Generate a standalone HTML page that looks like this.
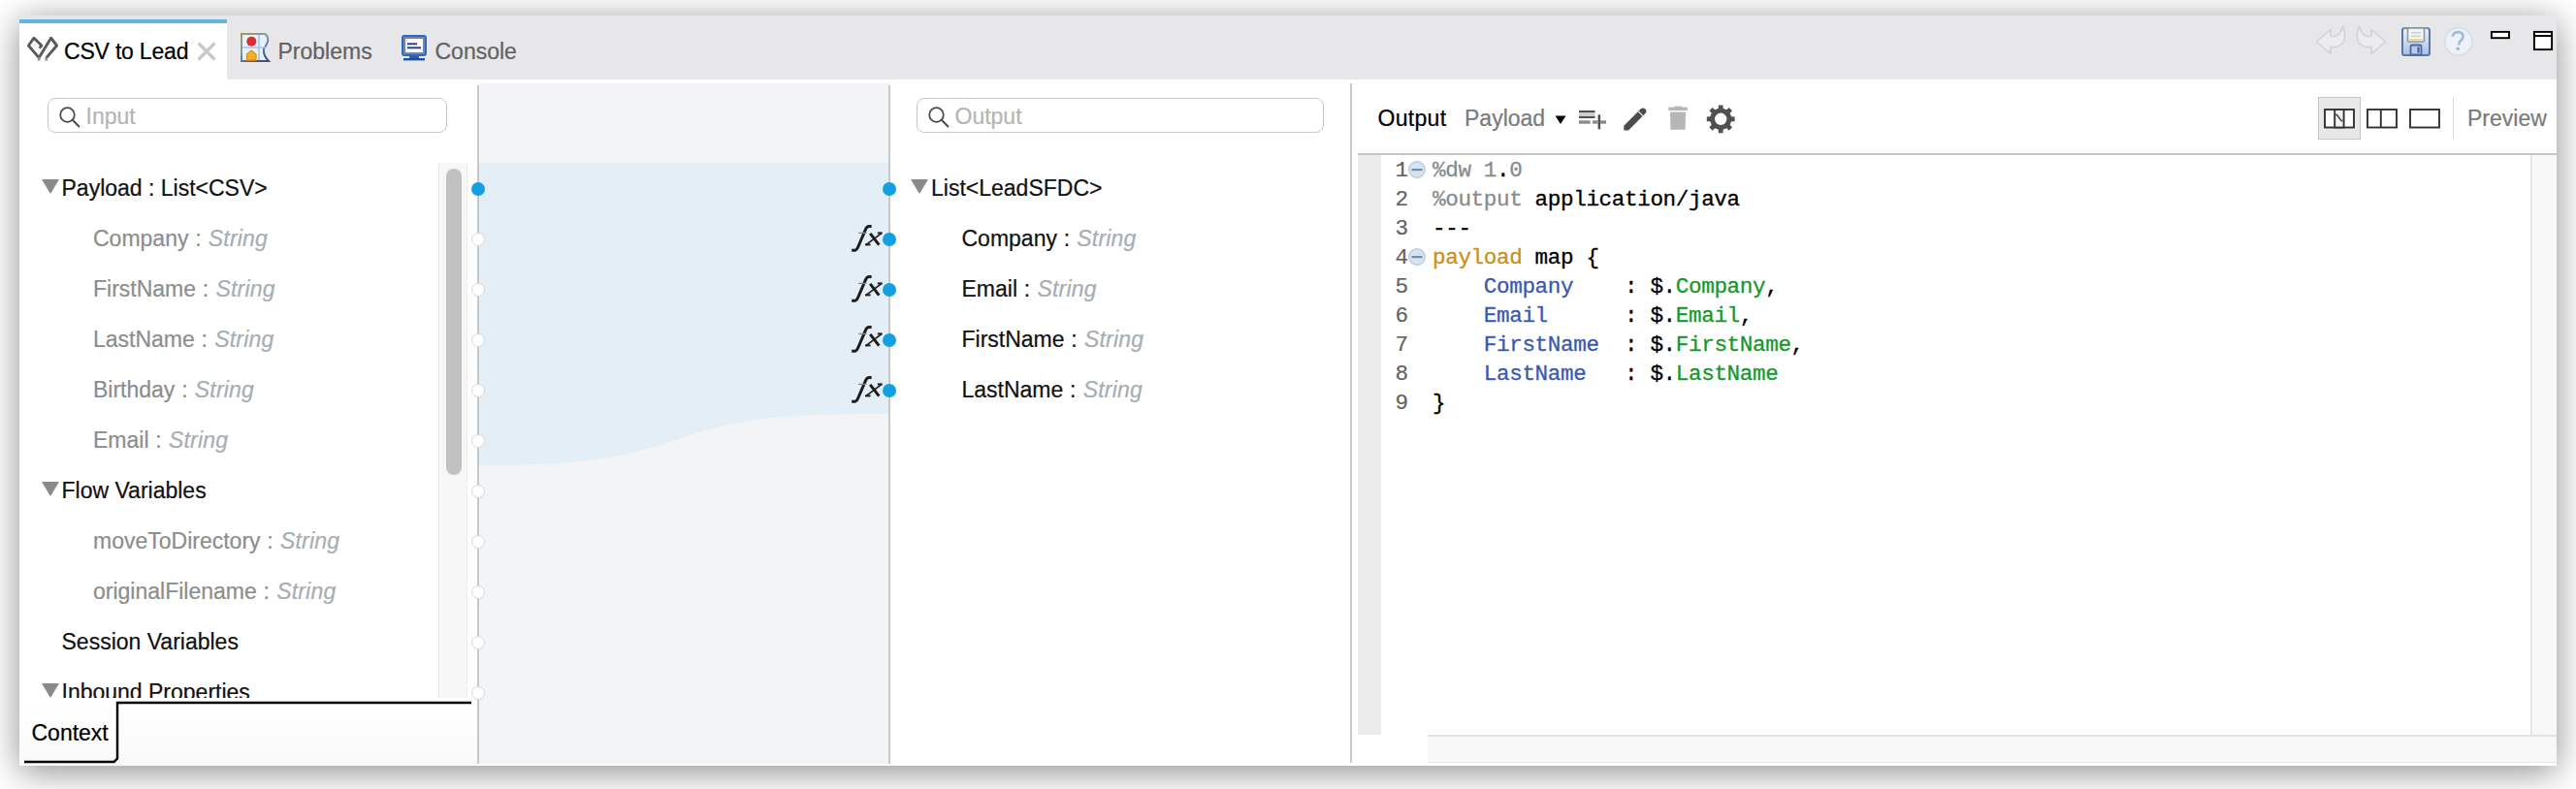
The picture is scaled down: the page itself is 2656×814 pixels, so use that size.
<!DOCTYPE html>
<html><head><meta charset="utf-8">
<style>
*{margin:0;padding:0;box-sizing:border-box}
html,body{width:2656px;height:814px;overflow:hidden;background:#fff;font-family:"Liberation Sans",sans-serif;}
.a{position:absolute}
#win{position:absolute;left:20px;top:16px;width:2616px;height:774px;background:#fff;box-shadow:0 6px 34px rgba(0,0,0,0.45);}
.t{position:absolute;font-size:23px;line-height:26px;white-space:nowrap;-webkit-text-stroke:0.22px currentColor}
.search{position:absolute;border:1.5px solid #c9c9c9;border-radius:8px;background:#fff}
.row{position:absolute;height:52px;line-height:52px;font-size:23px;white-space:nowrap;-webkit-text-stroke:0.22px currentColor}
.hd{color:#111}
.ch{color:#8d8d8d}
.ty{color:#a6aeb4;font-style:italic;letter-spacing:0.2px}
.sep{letter-spacing:0.4px}
.tri{position:absolute;width:0;height:0;border-left:9px solid transparent;border-right:9px solid transparent;border-top:15px solid #8a8a8a}
.dot{position:absolute;width:14px;height:14px;border-radius:7px;background:#13a0e1}
.hdot{position:absolute;width:14px;height:14px;border-radius:7px;background:#fff;border:1.4px solid #d8d8d8}
.fx{position:absolute;font-family:"Liberation Serif",serif;font-style:italic;font-size:31px;color:#2a2a2a;line-height:30px;letter-spacing:-1px;white-space:nowrap}
.code{position:absolute;font-family:"Liberation Mono",monospace;font-size:22.6px;letter-spacing:-0.36px;-webkit-text-stroke:0.3px currentColor;line-height:30px;white-space:pre;color:#000}
.ln{position:absolute;font-family:"Liberation Mono",monospace;font-size:22.6px;-webkit-text-stroke:0.2px currentColor;line-height:30px;color:#626262;white-space:pre}
.g{color:#8a8a8a}.k{color:#c98f1a}.b{color:#3a58b0}.gr{color:#15982a}
</style></head><body>
<div id="win"></div>
<div class="a" style="left:20px;top:16px;width:2616px;height:66px;background:#e7e7ea"></div>
<div class="a" style="left:20px;top:20px;width:214px;height:62px;background:#fff"></div>
<div class="a" style="left:20px;top:20px;width:214px;height:4px;background:#63b5e1"></div>
<svg class="a" style="left:26px;top:36px" width="36" height="30" viewBox="26 36 36 30">
<g fill="none" stroke="#5a5a5a" stroke-width="2.9" stroke-linejoin="round" stroke-linecap="butt">
<path d="M40.6 49.6 L42.9 47 L35 39.2 L29.4 47 L40.2 59.6 L52.6 39.2 L58.6 47 L47.8 59.6"/>
<path d="M40.2 59 L40.2 62.6 M47.8 59 L47.8 62.6" stroke="#8a8a8a" stroke-width="2.6"/>
</g></svg>
<div class="t" style="left:66px;top:40.2px;color:#000;letter-spacing:-0.2px">CSV to Lead</div>
<svg class="a" style="left:202px;top:42px" width="22" height="22" viewBox="202 42 22 22">
<path d="M204.5 44.5 L221.5 61.5 M221.5 44.5 L204.5 61.5" stroke="#c9c9c9" stroke-width="3.2"/></svg>
<svg class="a" style="left:246px;top:32px" width="34" height="34" viewBox="246 32 34 34">
<defs><linearGradient id="pg" x1="0" y1="0" x2="0.6" y2="1"><stop offset="0" stop-color="#a89a50"/><stop offset="0.45" stop-color="#8898aa"/><stop offset="1" stop-color="#43527a"/></linearGradient></defs>
<path d="M249 35 L273 35 Q277 37 276 43 Q274 48 272 50 Q271 57 277 63 L249 63 Z" fill="#e4f3fb" stroke="url(#pg)" stroke-width="2"/>
<path d="M250 49 L275 49 M267 36 L267 62" stroke="#a9c3e6" stroke-width="1.6"/>
<circle cx="259.3" cy="42.8" r="5" fill="#dc2d32"/>
<path d="M254.5 62 L254.5 56 L259.3 52 L264 56 L264 62 Z" fill="#f0b02a" stroke="#e2901a" stroke-width="1.3"/>
</svg>
<div class="t" style="left:286.5px;top:40.2px;color:#626262">Problems</div>
<svg class="a" style="left:412px;top:34px" width="30" height="30" viewBox="412 34 30 30">
<rect x="415" y="37" width="24" height="20" rx="2" fill="#7a84a0" stroke="#2f6ac2" stroke-width="2"/>
<rect x="418" y="40" width="18" height="14" fill="#fff"/>
<rect x="418" y="40" width="2" height="14" fill="#d4f4ff"/>
<rect x="420" y="44.3" width="10" height="2" fill="#2e3e8a"/>
<rect x="420" y="48.3" width="14" height="2" fill="#2e3e8a"/>
<rect x="422" y="57.5" width="10" height="2.5" fill="#2f5ea8"/>
<rect x="416" y="60" width="22" height="2.4" fill="#2050a0"/>
</svg>
<div class="t" style="left:448.5px;top:40.2px;color:#626262">Console</div>
<svg class="a" style="left:2384px;top:24px" width="250" height="38" viewBox="2384 24 250 38">
<path d="M2388.5 43 L2403 30.5 L2403 37.5 L2407 37.5 Q2413 37 2415.5 27 Q2419 35 2417 42 Q2414 48.5 2406 48.5 L2403 48.5 L2403 55.5 Z" fill="#ececee" stroke="#d2d2d2" stroke-width="1.6" stroke-linejoin="round"/>
<path d="M2459.5 43 L2445 30.5 L2445 37.5 L2441 37.5 Q2435 37 2432.5 27 Q2429 35 2431 42 Q2434 48.5 2442 48.5 L2445 48.5 L2445 55.5 Z" fill="#ececee" stroke="#d2d2d2" stroke-width="1.6" stroke-linejoin="round"/>
<defs><linearGradient id="sg" x1="0" y1="0" x2="0" y2="1"><stop offset="0" stop-color="#eef3fa"/><stop offset="1" stop-color="#a9c0e2"/></linearGradient></defs>
<rect x="2477" y="29" width="28" height="28" rx="2.5" fill="url(#sg)" stroke="#5876a8" stroke-width="2"/><path d="M2478 29 L2504 29" stroke="#7f969e" stroke-width="2"/>
<rect x="2482.5" y="29" width="17" height="14" rx="1.5" fill="#f4f6f6" stroke="#8c9a9e" stroke-width="1.6"/>
<rect x="2486" y="33" width="10" height="1.6" fill="#c9d3d6"/><rect x="2486" y="36.5" width="10" height="1.6" fill="#c9d3d6"/>
<rect x="2484" y="40" width="14" height="1.5" fill="#f0cf8a"/>
<rect x="2485.5" y="46.5" width="11" height="10" rx="1.5" fill="#b8cdea" stroke="#4a68a8" stroke-width="1.8"/>
<rect x="2492.5" y="48.5" width="2" height="6" fill="#3a5898"/>
<circle cx="2534.8" cy="42.9" r="14.2" fill="#eef1f5" stroke="#d3dfeb" stroke-width="1.8"/>
<path d="M2528.6 37.6 Q2530 33 2534.5 33 Q2539.5 33.3 2539.5 37.5 Q2539.5 40.5 2536 43 L2535 46.5" fill="none" stroke="#94b0d4" stroke-width="2.5" opacity="0.85"/>
<rect x="2532.6" y="48.8" width="3.2" height="3" fill="#9ab5da"/>
<rect x="2568.9" y="32.9" width="18.1" height="6.3" fill="#fff" stroke="#000" stroke-width="1.9"/>
<rect x="2612.9" y="32.9" width="18.2" height="18.2" fill="#fff" stroke="#000" stroke-width="1.9"/>
<rect x="2612.9" y="36" width="18.2" height="2" fill="#000"/>
</svg>
<div class="search" style="left:49px;top:101px;width:412px;height:36px"></div>
<svg class="a" style="left:58px;top:108px" width="28" height="26" viewBox="58 108 28 26">
<circle cx="69.5" cy="118.5" r="7.3" fill="none" stroke="#4a4a4a" stroke-width="1.8"/>
<path d="M74.8 123.8 L82 131" stroke="#4a4a4a" stroke-width="2"/></svg>
<div class="t" style="left:88.5px;top:107.4px;color:#b5b5b5">Input</div>
<div class="a" style="left:20px;top:160px;width:432px;height:560px;overflow:hidden">
<div class="tri" style="left:22.7px;top:25px"></div>
<div class="row hd" style="left:43.5px;top:8px">Payload : List&lt;CSV&gt;</div>
<div class="row ch" style="left:76px;top:60px">Company<span class="sep"> : </span><span class="ty">String</span></div>
<div class="row ch" style="left:76px;top:112px">FirstName<span class="sep"> : </span><span class="ty">String</span></div>
<div class="row ch" style="left:76px;top:164px">LastName<span class="sep"> : </span><span class="ty">String</span></div>
<div class="row ch" style="left:76px;top:216px">Birthday<span class="sep"> : </span><span class="ty">String</span></div>
<div class="row ch" style="left:76px;top:268px">Email<span class="sep"> : </span><span class="ty">String</span></div>
<div class="tri" style="left:22.7px;top:337px"></div>
<div class="row hd" style="left:43.5px;top:320px">Flow Variables</div>
<div class="row ch" style="left:76px;top:372px">moveToDirectory<span class="sep"> : </span><span class="ty">String</span></div>
<div class="row ch" style="left:76px;top:424px">originalFilename<span class="sep"> : </span><span class="ty">String</span></div>
<div class="row hd" style="left:43.5px;top:476px">Session Variables</div>
<div class="tri" style="left:22.7px;top:545px"></div>
<div class="row hd" style="left:43.5px;top:528px">Inbound Properties</div>
</div>
<div class="a" style="left:452px;top:168px;width:30px;height:552px;background:#f7f7f7;border-left:1.5px solid #e6e6e6;border-right:1.5px solid #ececec"></div>
<div class="a" style="left:460px;top:174px;width:16px;height:316px;border-radius:8px;background:#c1c1c1"></div>
<div class="a" style="left:20px;top:726px;width:472px;height:64px;background:linear-gradient(#fff,#f9f9f9)"></div>
<svg class="a" style="left:20px;top:718px" width="470" height="72" viewBox="20 718 470 72">
<path d="M25 786 L117.5 786 L121 782.5 L121 725 L486 725" fill="none" stroke="#000" stroke-width="2.4"/></svg>
<div class="t" style="left:32.5px;top:742.9px;color:#000">Context</div>
<div class="a" style="left:492px;top:86px;width:426px;height:702px;background:#f3f4f6"></div>
<svg class="a" style="left:494px;top:168px" width="422" height="320" viewBox="494 168 422 320">
<path d="M494 168 L916 168 L916 427 C 800 427 760 432 700 453 C 640 474 590 480 494 480 Z" fill="#e3eef6"/></svg>
<div class="a" style="left:492px;top:88px;width:2px;height:700px;background:#c8c8c8"></div>
<div class="a" style="left:916px;top:88px;width:2px;height:700px;background:#c8c8c8"></div>
<div class="dot" style="left:486px;top:187.5px"></div>
<div class="hdot" style="left:486px;top:239.5px"></div>
<div class="hdot" style="left:486px;top:291.5px"></div>
<div class="hdot" style="left:486px;top:343.5px"></div>
<div class="hdot" style="left:486px;top:395.5px"></div>
<div class="hdot" style="left:486px;top:447.5px"></div>
<div class="hdot" style="left:486px;top:499.5px"></div>
<div class="hdot" style="left:486px;top:551.5px"></div>
<div class="hdot" style="left:486px;top:603.5px"></div>
<div class="hdot" style="left:486px;top:655.5px"></div>
<div class="hdot" style="left:486px;top:707.5px"></div>
<div class="dot" style="left:910px;top:187.5px"></div>
<svg class="a" style="left:874px;top:227.8px" width="40" height="36" viewBox="874 228 40 36">
<g fill="none" stroke="#1e1e1e" stroke-linecap="butt">
<path d="M878.2 258.2 L881.8 258.2 Q883.6 257.6 884.6 255 L892.6 236.4 Q893.8 233.6 896 233.5 L898.6 233.5" stroke-width="3"/>
<path d="M885 240.4 L893.6 240.4" stroke-width="1.3" stroke="#8c8c8c"/>
<path d="M897.2 240.8 L906.3 252.6" stroke-width="3"/>
<path d="M909.2 240.4 L892.8 252.6" stroke-width="1.7"/>
<path d="M892 252.4 L897.5 252.4" stroke-width="2"/>
<path d="M904.8 240.4 L909.6 240.4" stroke-width="2"/>
</g></svg>
<div class="dot" style="left:910px;top:239.5px"></div>
<svg class="a" style="left:874px;top:279.8px" width="40" height="36" viewBox="874 228 40 36">
<g fill="none" stroke="#1e1e1e" stroke-linecap="butt">
<path d="M878.2 258.2 L881.8 258.2 Q883.6 257.6 884.6 255 L892.6 236.4 Q893.8 233.6 896 233.5 L898.6 233.5" stroke-width="3"/>
<path d="M885 240.4 L893.6 240.4" stroke-width="1.3" stroke="#8c8c8c"/>
<path d="M897.2 240.8 L906.3 252.6" stroke-width="3"/>
<path d="M909.2 240.4 L892.8 252.6" stroke-width="1.7"/>
<path d="M892 252.4 L897.5 252.4" stroke-width="2"/>
<path d="M904.8 240.4 L909.6 240.4" stroke-width="2"/>
</g></svg>
<div class="dot" style="left:910px;top:291.5px"></div>
<svg class="a" style="left:874px;top:331.8px" width="40" height="36" viewBox="874 228 40 36">
<g fill="none" stroke="#1e1e1e" stroke-linecap="butt">
<path d="M878.2 258.2 L881.8 258.2 Q883.6 257.6 884.6 255 L892.6 236.4 Q893.8 233.6 896 233.5 L898.6 233.5" stroke-width="3"/>
<path d="M885 240.4 L893.6 240.4" stroke-width="1.3" stroke="#8c8c8c"/>
<path d="M897.2 240.8 L906.3 252.6" stroke-width="3"/>
<path d="M909.2 240.4 L892.8 252.6" stroke-width="1.7"/>
<path d="M892 252.4 L897.5 252.4" stroke-width="2"/>
<path d="M904.8 240.4 L909.6 240.4" stroke-width="2"/>
</g></svg>
<div class="dot" style="left:910px;top:343.5px"></div>
<svg class="a" style="left:874px;top:383.8px" width="40" height="36" viewBox="874 228 40 36">
<g fill="none" stroke="#1e1e1e" stroke-linecap="butt">
<path d="M878.2 258.2 L881.8 258.2 Q883.6 257.6 884.6 255 L892.6 236.4 Q893.8 233.6 896 233.5 L898.6 233.5" stroke-width="3"/>
<path d="M885 240.4 L893.6 240.4" stroke-width="1.3" stroke="#8c8c8c"/>
<path d="M897.2 240.8 L906.3 252.6" stroke-width="3"/>
<path d="M909.2 240.4 L892.8 252.6" stroke-width="1.7"/>
<path d="M892 252.4 L897.5 252.4" stroke-width="2"/>
<path d="M904.8 240.4 L909.6 240.4" stroke-width="2"/>
</g></svg>
<div class="dot" style="left:910px;top:395.5px"></div>
<div class="search" style="left:945px;top:101px;width:420px;height:36px"></div>
<svg class="a" style="left:954px;top:108px" width="28" height="26" viewBox="954 108 28 26">
<circle cx="965.5" cy="118.5" r="7.3" fill="none" stroke="#4a4a4a" stroke-width="1.8"/>
<path d="M970.8 123.8 L978 131" stroke="#4a4a4a" stroke-width="2"/></svg>
<div class="t" style="left:984.5px;top:107.4px;color:#b5b5b5">Output</div>
<div class="tri" style="left:939px;top:185px"></div>
<div class="row hd" style="left:960px;top:168px">List&lt;LeadSFDC&gt;</div>
<div class="row hd" style="left:991.5px;top:220px">Company<span class="sep"> : </span><span class="ty">String</span></div>
<div class="row hd" style="left:991.5px;top:272px">Email<span class="sep"> : </span><span class="ty">String</span></div>
<div class="row hd" style="left:991.5px;top:324px">FirstName<span class="sep"> : </span><span class="ty">String</span></div>
<div class="row hd" style="left:991.5px;top:376px">LastName<span class="sep"> : </span><span class="ty">String</span></div>
<div class="a" style="left:1392px;top:86px;width:2px;height:701px;background:#c9c9c9"></div>
<div class="t" style="left:1420.5px;top:109.2px;color:#000;letter-spacing:0.3px">Output</div>
<div class="t" style="left:1510px;top:109.2px;color:#7a7a7a">Payload</div>
<svg class="a" style="left:1600px;top:104px" width="200" height="36" viewBox="1600 104 200 36">
<path d="M1603.5 119.5 L1614.5 119.5 L1609 128 Z" fill="#000"/>
<rect x="1628" y="115" width="16.5" height="6" fill="#cdcdcd"/>
<g fill="#505050"><rect x="1628" y="114" width="16.5" height="2"/><rect x="1628" y="120" width="16.5" height="2"/>
<rect x="1647.6" y="118.3" width="2.5" height="15"/></g>
<g fill="#8a8a8a"><rect x="1628" y="124.3" width="11.7" height="3.4"/><rect x="1642" y="124.3" width="5.6" height="3.4"/><rect x="1650.1" y="124.3" width="5.9" height="3.4"/></g>
<path d="M1674.3 129.8 L1691.5 112.6 Q1694 110.2 1696.4 112.6 Q1698.6 114.8 1696.2 117.2 L1679 134.4 L1674.3 134.4 Z" fill="#4c4c4c"/>
<path d="M1689.2 114.8 L1694.2 119.8" stroke="#fff" stroke-width="1.1"/>
<g fill="#b6b6b6"><rect x="1720.3" y="110.6" width="19.5" height="3.4"/><rect x="1726.6" y="109.6" width="7.4" height="1.5"/><path d="M1722 115.5 L1738 115.5 L1737.6 133.7 L1722.4 133.7 Z"/></g>
</svg>
<svg class="a" style="left:1756px;top:104px" width="38" height="38" viewBox="1756 104 38 38">
<path d="M1785.13,120.36 L1788.61,120.47 L1788.61,125.13 L1785.13,125.24 L1783.66,128.80 L1786.04,131.35 L1782.75,134.64 L1780.20,132.26 L1776.64,133.73 L1776.53,137.21 L1771.87,137.21 L1771.76,133.73 L1768.20,132.26 L1765.65,134.64 L1762.36,131.35 L1764.74,128.80 L1763.27,125.24 L1759.79,125.13 L1759.79,120.47 L1763.27,120.36 L1764.74,116.80 L1762.36,114.25 L1765.65,110.96 L1768.20,113.34 L1771.76,111.87 L1771.87,108.39 L1776.53,108.39 L1776.64,111.87 L1780.20,113.34 L1782.75,110.96 L1786.04,114.25 L1783.66,116.80 Z M1780.4,122.8 A6.2 6.2 0 1 0 1768.0,122.8 A6.2 6.2 0 1 0 1780.4,122.8 Z" fill="#505050" fill-rule="evenodd"/></svg>
<div class="a" style="left:2390px;top:100px;width:44px;height:44px;background:#e8e8e8;border:1.8px solid #c6c6c6"></div>
<svg class="a" style="left:2390px;top:104px" width="130" height="36" viewBox="2390 104 130 36">
<g fill="#fff" stroke="#333" stroke-width="1.9">
<rect x="2397" y="113" width="30" height="18.5"/><rect x="2407.2" y="113" width="9.4" height="18.5" fill="#f2f2f2"/>
<path d="M2408 118.6 L2409.6 118.6 L2414 124.6 L2415.6 124.6" fill="none" stroke-width="1.5" stroke="#444"/>
<rect x="2441" y="113" width="30" height="18.5"/><path d="M2454.8 113 L2454.8 131.5"/>
<rect x="2485" y="113" width="30" height="18.5"/>
</g></svg>
<div class="a" style="left:2528.5px;top:100px;width:1.5px;height:44px;background:#dcdcdc"></div>
<div class="t" style="left:2544px;top:108.9px;color:#7a7a7a">Preview</div>
<div class="a" style="left:1400px;top:158px;width:1236px;height:2px;background:#c6c6c6"></div>
<div class="a" style="left:1400px;top:160px;width:24px;height:598px;background:#ececec"></div>
<div class="a" style="left:2609px;top:160px;width:27px;height:600px;background:#f8f8f8;border-left:2px solid #e6e6e6"></div>
<div class="a" style="left:1472px;top:758px;width:1164px;height:29px;background:#f8f8f8;border-top:2px solid #e2e2e2;border-bottom:1.5px solid #e6e6e6"></div>
<div class="a" style="left:2611px;top:760px;width:25px;height:25.5px;background:#f8f8f8"></div>
<div class="ln" style="left:1438.5px;top:161px">1
2
3
4
5
6
7
8
9</div>
<div class="code" style="left:1477px;top:161px"><span class="g">%dw</span> <span class="g">1</span>.<span class="g">0</span>
<span class="g">%output</span> application/java
---
<span class="k">payload</span> map {
    <span class="b">Company</span>    : $.<span class="gr">Company</span>,
    <span class="b">Email</span>      : $.<span class="gr">Email</span>,
    <span class="b">FirstName</span>  : $.<span class="gr">FirstName</span>,
    <span class="b">LastName</span>   : $.<span class="gr">LastName</span>
}</div>
<svg class="a" style="left:1450px;top:163.8px" width="22" height="22" viewBox="0 0 22 22">
<circle cx="11" cy="11" r="8.3" fill="#d7e3ef" stroke="#b9cde0" stroke-width="1.4"/>
<rect x="5.5" y="10" width="11" height="2.2" fill="#6f8fb0"/></svg>
<svg class="a" style="left:1450px;top:253.8px" width="22" height="22" viewBox="0 0 22 22">
<circle cx="11" cy="11" r="8.3" fill="#d7e3ef" stroke="#b9cde0" stroke-width="1.4"/>
<rect x="5.5" y="10" width="11" height="2.2" fill="#6f8fb0"/></svg>
</body></html>
